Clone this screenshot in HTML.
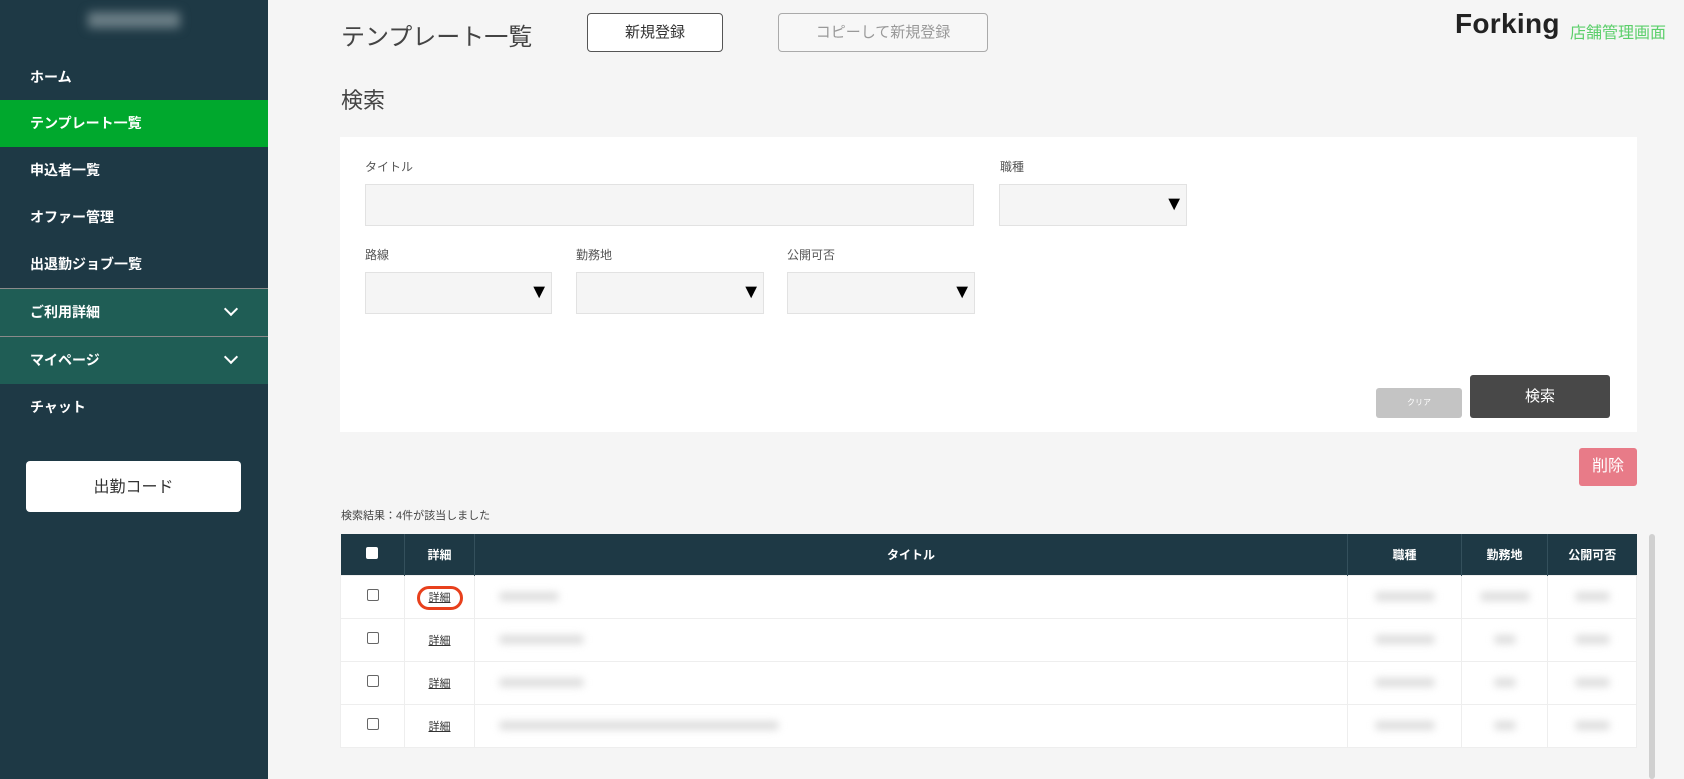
<!DOCTYPE html>
<html><head><meta charset="utf-8"><style>
*{box-sizing:border-box;margin:0;padding:0}
body{width:1684px;height:779px;background:#f5f5f5;font-family:"Liberation Sans","Noto Sans CJK JP",sans-serif;position:relative;overflow:hidden;color:#333}
.a{position:absolute}
.sb{left:0;top:0;width:268px;height:779px;background:#1e3945}
.nav{left:0;width:268px;height:47px;color:#fff;font-size:14px;font-weight:bold;padding-left:30px;line-height:47px}
.acc{background:#1f5d55;border-top:1px solid #8a8a8a}
.chev{position:absolute;right:32px;top:15px;width:10px;height:10px;border-right:2px solid #fff;border-bottom:2px solid #fff;transform:rotate(45deg)}
.lbl{font-size:12px;color:#555}
.inp{background:#f5f5f5;border:1px solid #e2e2e2}
.tri{position:absolute;right:2px;top:8px;font-size:20px;color:#000}
table{border-collapse:collapse;position:absolute;left:340px;top:534px;width:1297px;font-size:12px}
th{background:#1e3945;color:#fff;height:41px;font-weight:bold;border-right:1px solid #34505c}
td{height:43px;background:#fff;border:1px solid #eee;text-align:center}
.cb{display:inline-block;width:12px;height:12px;border:1px solid #666;border-radius:2px;background:#fff}
.bl{display:inline-block;height:9px;background:#ddd;filter:blur(4px);border-radius:4px}
a{color:#333;font-size:11px;text-decoration:underline}
</style></head><body>
<div class="a sb"></div>
<div class="a" style="left:88px;top:12px;width:92px;height:16px;background:#6b7e86;filter:blur(5px)"></div>
<div class="a nav" style="top:54px">ホーム</div>
<div class="a nav" style="top:100px;background:#00a82d">テンプレート一覧</div>
<div class="a nav" style="top:147px">申込者一覧</div>
<div class="a nav" style="top:194px">オファー管理</div>
<div class="a nav" style="top:241px">出退勤ジョブ一覧</div>
<div class="a nav acc" style="top:288px;height:48px">ご利用詳細<span class="chev"></span></div>
<div class="a nav acc" style="top:336px;height:48px">マイページ<span class="chev"></span></div>
<div class="a nav" style="top:384px">チャット</div>
<div class="a" style="left:26px;top:461px;width:215px;height:51px;background:#fff;border-radius:4px;text-align:center;line-height:53px;font-size:16px;color:#333">出勤コード</div>

<div class="a" style="left:341px;top:17px;font-size:24px;color:#444">テンプレート一覧</div>
<div class="a" style="left:587px;top:13px;width:136px;height:39px;border:1px solid #555;border-radius:4px;background:#fff;text-align:center;line-height:37px;font-size:15px;color:#333">新規登録</div>
<div class="a" style="left:778px;top:13px;width:210px;height:39px;border:1px solid #aaa;border-radius:4px;background:#f7f7f7;text-align:center;line-height:37px;font-size:15px;color:#999">コピーして新規登録</div>
<div class="a" style="left:1455px;top:8px;font-size:28px;font-weight:bold;color:#222;letter-spacing:0.3px">Forking</div>
<div class="a" style="left:1570px;top:19px;font-size:16px;color:#5bcf6a">店舗管理画面</div>
<div class="a" style="left:341px;top:83px;font-size:22px;color:#444">検索</div>

<div class="a" style="left:340px;top:137px;width:1297px;height:295px;background:#fff"></div>
<div class="a lbl" style="left:365px;top:158px">タイトル</div>
<div class="a inp" style="left:365px;top:184px;width:609px;height:42px"></div>
<div class="a lbl" style="left:1000px;top:158px">職種</div>
<div class="a inp" style="left:999px;top:184px;width:188px;height:42px"><span class="tri">▼</span></div>
<div class="a lbl" style="left:365px;top:246px">路線</div>
<div class="a lbl" style="left:576px;top:246px">勤務地</div>
<div class="a lbl" style="left:787px;top:246px">公開可否</div>
<div class="a inp" style="left:365px;top:272px;width:187px;height:42px"><span class="tri">▼</span></div>
<div class="a inp" style="left:576px;top:272px;width:188px;height:42px"><span class="tri">▼</span></div>
<div class="a inp" style="left:787px;top:272px;width:188px;height:42px"><span class="tri">▼</span></div>
<div class="a" style="left:1376px;top:388px;width:86px;height:30px;background:#c4c4c4;border-radius:3px;color:#fff;font-size:8px;text-align:center;line-height:30px">クリア</div>
<div class="a" style="left:1470px;top:375px;width:140px;height:43px;background:#484848;border-radius:3px;color:#fff;font-size:15px;text-align:center;line-height:43px">検索</div>
<div class="a" style="left:1579px;top:448px;width:58px;height:38px;background:#e87b88;border-radius:3px;color:#fff;font-size:16px;text-align:center;line-height:38px">削除</div>
<div class="a" style="left:341px;top:507px;font-size:11px;color:#444">検索結果：4件が該当しました</div>

<table>
<tr><th style="width:64px"><span class="cb" style="border-color:#fff"></span></th><th style="width:70px">詳細</th><th>タイトル</th><th style="width:114px">職種</th><th style="width:86px">勤務地</th><th style="width:89px;border-right:0">公開可否</th></tr>
<tr><td><span class="cb"></span></td><td><a style="outline:3px solid #e8401c;outline-offset:3px;border-radius:8px;padding:0 6px">詳細</a></td><td style="text-align:left;padding-left:24px"><span class="bl" style="width:60px"></span></td><td><span class="bl" style="width:60px"></span></td><td><span class="bl" style="width:50px"></span></td><td><span class="bl" style="width:35px"></span></td></tr>
<tr><td><span class="cb"></span></td><td><a>詳細</a></td><td style="text-align:left;padding-left:24px"><span class="bl" style="width:85px"></span></td><td><span class="bl" style="width:60px"></span></td><td><span class="bl" style="width:22px"></span></td><td><span class="bl" style="width:35px"></span></td></tr>
<tr><td><span class="cb"></span></td><td><a>詳細</a></td><td style="text-align:left;padding-left:24px"><span class="bl" style="width:85px"></span></td><td><span class="bl" style="width:60px"></span></td><td><span class="bl" style="width:22px"></span></td><td><span class="bl" style="width:35px"></span></td></tr>
<tr><td><span class="cb"></span></td><td><a>詳細</a></td><td style="text-align:left;padding-left:24px"><span class="bl" style="width:280px"></span></td><td><span class="bl" style="width:60px"></span></td><td><span class="bl" style="width:22px"></span></td><td><span class="bl" style="width:35px"></span></td></tr>
</table>
<div class="a" style="left:1649px;top:534px;width:6px;height:245px;background:#d0d0d0;border-radius:3px"></div>
</body></html>
